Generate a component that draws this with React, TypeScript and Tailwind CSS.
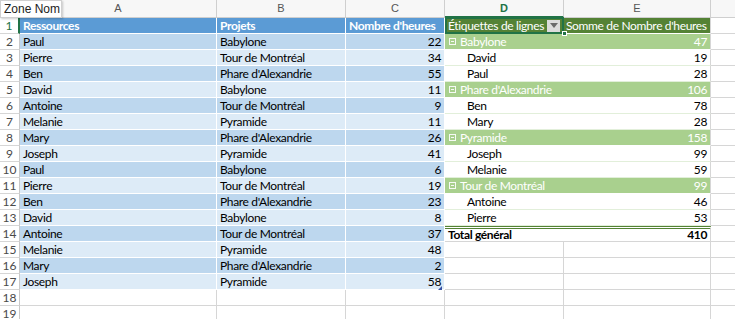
import React from 'react';

const FONT = "font-['Lato','Liberation_Sans',sans-serif]";

const source: [string, string, number][] = [
  ['Paul', 'Babylone', 22],
  ['Pierre', 'Tour de Montréal', 34],
  ['Ben', "Phare d'Alexandrie", 55],
  ['David', 'Babylone', 11],
  ['Antoine', 'Tour de Montréal', 9],
  ['Melanie', 'Pyramide', 11],
  ['Mary', "Phare d'Alexandrie", 26],
  ['Joseph', 'Pyramide', 41],
  ['Paul', 'Babylone', 6],
  ['Pierre', 'Tour de Montréal', 19],
  ['Ben', "Phare d'Alexandrie", 23],
  ['David', 'Babylone', 8],
  ['Antoine', 'Tour de Montréal', 37],
  ['Melanie', 'Pyramide', 48],
  ['Mary', "Phare d'Alexandrie", 2],
  ['Joseph', 'Pyramide', 58],
];

type PivotRow = { kind: 'group' | 'item' | 'total'; label: string; value: number };

const pivot: PivotRow[] = [
  { kind: 'group', label: 'Babylone', value: 47 },
  { kind: 'item', label: 'David', value: 19 },
  { kind: 'item', label: 'Paul', value: 28 },
  { kind: 'group', label: "Phare d'Alexandrie", value: 106 },
  { kind: 'item', label: 'Ben', value: 78 },
  { kind: 'item', label: 'Mary', value: 28 },
  { kind: 'group', label: 'Pyramide', value: 158 },
  { kind: 'item', label: 'Joseph', value: 99 },
  { kind: 'item', label: 'Melanie', value: 59 },
  { kind: 'group', label: 'Tour de Montréal', value: 99 },
  { kind: 'item', label: 'Antoine', value: 46 },
  { kind: 'item', label: 'Pierre', value: 53 },
  { kind: 'total', label: 'Total général', value: 410 },
];

function RowNum({ n }: { n: number }) {
  return (
    <div
      className={`w-[20px] shrink-0 flex items-center justify-center border-b border-[#d6d6d6] text-[12px] tracking-normal ${
        n === 1 ? 'border-r-2 border-r-[#217346] text-[#217346]' : 'border-r border-r-[#c9c9c9] text-[#4a4a4a]'
      }`}
    >
      {n}
    </div>
  );
}

function Collapse() {
  return (
    <span className="mr-[4px] flex h-[7px] w-[7px] shrink-0 items-center justify-center border border-white/90">
      <span className="h-[1px] w-[3px] bg-white/90" />
    </span>
  );
}

function TableCells({ r }: { r: number }) {
  if (r === 1) {
    return (
      <>
        <div className="w-[197px] shrink-0 border-r border-b border-white bg-[#5b9bd5] pl-[3px] font-bold text-white">Ressources</div>
        <div className="w-[129px] shrink-0 border-r border-b border-white bg-[#5b9bd5] pl-[3px] font-bold text-white">Projets</div>
        <div className="w-[99px] shrink-0 border-r border-b border-white bg-[#5b9bd5] pl-[3px] font-bold text-white">Nombre d'heures</div>
      </>
    );
  }
  const d = source[r - 2];
  if (!d) {
    return (
      <>
        <div className="w-[197px] shrink-0 border-r border-b border-[#d6d6d6]" />
        <div className="w-[129px] shrink-0 border-r border-b border-[#d6d6d6]" />
        <div className="w-[99px] shrink-0 border-r border-b border-[#d6d6d6]" />
      </>
    );
  }
  const bg = r % 2 === 0 ? 'bg-[#bdd7ee]' : 'bg-[#ddebf7]';
  return (
    <>
      <div className={`w-[197px] shrink-0 border-r border-b border-white pl-[3px] ${bg}`}>{d[0]}</div>
      <div className={`w-[129px] shrink-0 border-r border-b border-white pl-[3px] ${bg}`}>{d[1]}</div>
      <div className={`relative w-[99px] shrink-0 border-r border-b border-white pr-[3px] text-right ${bg}`}>
        {d[2]}
        {r === 17 && (
          <span className="absolute right-[2px] bottom-[-1px] h-0 w-0 border-l-[4px] border-b-[4px] border-l-transparent border-b-[#3a55a4]" />
        )}
      </div>
    </>
  );
}

function PivotCells({ r }: { r: number }) {
  if (r === 1) {
    return (
      <>
        <div className="relative w-[119px] shrink-0 border-b border-white bg-[#548235] text-white">
          <div className="absolute inset-x-0 top-[-1px] bottom-[-1px] z-10 border-2 border-[#217346]" />
          <span className="absolute right-[-3px] bottom-[-3px] z-20 h-[5px] w-[5px] border border-white bg-[#217346]" />
          <div className="flex h-full items-center pl-[3px]">
            <span className="min-w-0 flex-1 overflow-hidden">Étiquettes de lignes</span>
            <span className="mr-[4px] flex h-[12px] w-[13px] shrink-0 items-center justify-center bg-[#dcdcdc]">
              <span className="h-0 w-0 border-x-[4px] border-t-[5px] border-x-transparent border-t-[#6a6a6a]" />
            </span>
          </div>
        </div>
        <div className="w-[147px] shrink-0 border-r border-r-[#d6d6d6] border-b border-b-white bg-[#548235] pl-[2px] text-white">
          Somme de Nombre d'heures
        </div>
      </>
    );
  }
  const p = pivot[r - 2];
  if (!p) {
    return (
      <>
        <div className="w-[119px] shrink-0 border-r border-b border-[#d6d6d6]" />
        <div className="w-[147px] shrink-0 border-r border-b border-[#d6d6d6]" />
      </>
    );
  }
  if (p.kind === 'group') {
    return (
      <>
        <div className="flex w-[119px] shrink-0 items-center border-b border-white bg-[#a9d08e] pl-[4px] text-white">
          <Collapse />
          {p.label}
        </div>
        <div className="w-[147px] shrink-0 border-r border-r-[#d6d6d6] border-b border-b-white bg-[#a9d08e] pr-[3px] text-right text-white">
          {p.value}
        </div>
      </>
    );
  }
  if (p.kind === 'total') {
    return (
      <>
        <div className="w-[119px] shrink-0 border-t-[3px] border-double border-t-[#548235] border-b border-b-[#d6d6d6] pl-[3px] font-bold leading-[12px]">
          {p.label}
        </div>
        <div className="w-[147px] shrink-0 border-t-[3px] border-double border-t-[#548235] border-r border-r-[#d6d6d6] border-b border-b-[#d6d6d6] pr-[3px] text-right font-bold leading-[12px]">
          {p.value}
        </div>
      </>
    );
  }
  return (
    <>
      <div className="w-[119px] shrink-0 border-b border-[#e2efda] pl-[22px]">{p.label}</div>
      <div className="w-[147px] shrink-0 border-r border-r-[#d6d6d6] border-b border-b-[#e2efda] pr-[3px] text-right">{p.value}</div>
    </>
  );
}

export default function App() {
  const rows = Array.from({ length: 19 }, (_, i) => i + 1);
  const letters = [
    ['A', 'w-[197px]'],
    ['B', 'w-[129px]'],
    ['C', 'w-[99px]'],
    ['D', 'w-[119px]'],
    ['E', 'w-[147px]'],
  ];

  return (
    <div className={`relative h-[319px] w-[735px] overflow-hidden whitespace-nowrap bg-white text-[12px] tracking-[-0.35px] text-black ${FONT}`}>
      {/* column letters */}
      <div className="flex h-[18px] bg-[#f7f7f7] text-[11px] tracking-normal text-[#555] font-['Liberation_Sans',sans-serif]">
        <div className="w-[20px] shrink-0 border-r border-b border-[#cfcfcf]" />
        {letters.map(([l, w]) => (
          <div
            key={l}
            className={`${w} shrink-0 flex items-center justify-center border-r border-[#cfcfcf] ${
              l === 'D' ? 'border-b-2 border-b-[#217346] font-bold text-[#217346]' : 'border-b border-b-[#cfcfcf]'
            }`}
          >
            {l}
          </div>
        ))}
        <div className="flex-1 border-b border-[#cfcfcf]" />
      </div>

      {rows.map((r) => (
        <div key={r} className="flex h-[16px] leading-[15px]">
          <RowNum n={r} />
          <TableCells r={r} />
          <PivotCells r={r} />
          <div className="flex-1 border-b border-[#d6d6d6]" />
        </div>
      ))}

      {/* name box */}
      <div className="absolute left-0 top-0 z-30 flex h-[18px] w-[62px] items-center border border-[#d0d0d0] bg-white pl-[3px] text-[12px] tracking-normal text-[#222] shadow-[1px_1px_2px_rgba(0,0,0,0.2)] font-['Liberation_Sans',sans-serif]">
        Zone Nom
      </div>
    </div>
  );
}
